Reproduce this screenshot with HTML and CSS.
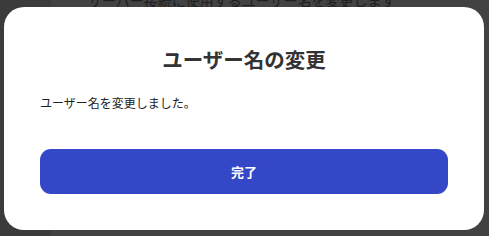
FILE: index.html
```html
<!DOCTYPE html>
<html lang="ja">
<head>
    <meta charset="UTF-8">
    <meta name="viewport" content="width=device-width, initial-scale=1.0">
    <title>ユーザー名の変更</title>
    <link rel="stylesheet" href="styles.css">
</head>
<body>
    <div class="page">
        <div class="sidebar"></div>
        <div class="main">
            <p class="hint">サーバー接続に使用するユーザー名を変更します</p>
        </div>
    </div>

    <div class="overlay">
        <div class="dialog">
            <h2 class="dialog-title">ユーザー名の変更</h2>
            <p class="dialog-text">ユーザー名を変更しました。</p>
            <button class="done">完了</button>
        </div>
    </div>
</body>
</html>
```

FILE: styles.css
```css
body {
    margin: 0;
    font-family: 'Noto Sans CJK JP', 'Noto Sans', sans-serif;
    background: #424242;
    height: 236px;
    overflow: hidden;
}
.page {
    display: flex;
    height: 100%;
}
.sidebar {
    width: 51px;
    background: #3b3b3b;
}
.main {
    flex: 1;
}
.hint {
    margin: -10px 0 0 37px;
    font-size: 14px;
    color: #1e1e1e;
}
.overlay {
    position: absolute;
    top: 0;
    left: 0;
    right: 0;
    bottom: 0;
}
.dialog {
    position: absolute;
    top: 7px;
    left: 4px;
    width: 480px;
    height: 223px;
    box-sizing: border-box;
    padding: 34px 36px 0;
    background: #fff;
    border-radius: 20px;
}
.dialog-title {
    margin: 0;
    text-align: center;
    font-size: 20.5px;
    font-weight: 700;
    color: #333;
    line-height: 36px;
}
.dialog-text {
    margin: 17px 0 0;
    font-size: 12px;
    color: #222;
    line-height: 18px;
}
.done {
    display: block;
    width: 100%;
    height: 45px;
    margin-top: 37px;
    border: none;
    border-radius: 11px;
    background: #3347c7;
    color: #fff;
    font-family: inherit;
    font-size: 13px;
    font-weight: 700;
}
```
